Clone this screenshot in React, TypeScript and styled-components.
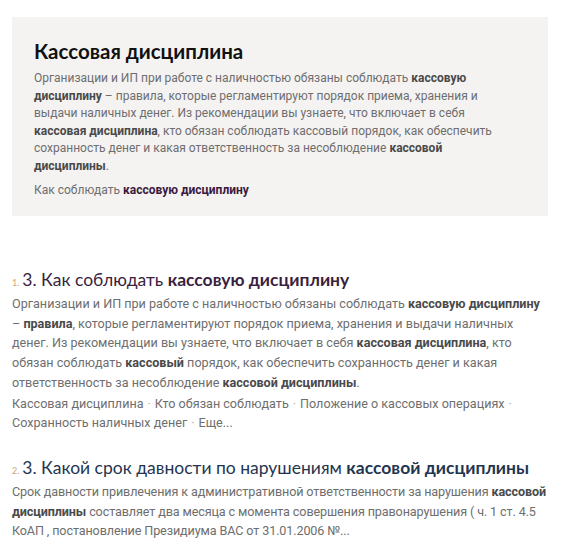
import React from "react";
import styled, { createGlobalStyle } from "styled-components";

const Global = createGlobalStyle`
  html, body { margin: 0; padding: 0; background: #fff; }
  body { font-family: Roboto, "Liberation Sans", sans-serif; }
`;

const Page = styled.div`
  padding: 17px 14px 0 12px;
  display: flex;
  flex-direction: column;
`;

const Card = styled.section`
  background: #f4f3f2;
  margin-right: 2px;
  padding: 21px 56px 0 22px;
  height: 199px;
  box-sizing: border-box;
`;

const CardTitle = styled.h1`
  margin: 0 0 6px;
  font-family: Lato, "Liberation Sans", sans-serif;
  font-size: 20.5px;
  font-weight: 700;
  color: #111;
  line-height: 26px;
`;

const CardText = styled.p`
  margin: 0;
  font-size: 12px;
  line-height: 17.5px;
  color: #6e6e6e;
  b { color: #4a4a4a; font-weight: 700; }
`;

const CardLink = styled.div`
  margin-top: 7px;
  font-size: 12px;
  line-height: 17.5px;
  color: #6e6e6e;
  b { color: #3b1a40; font-weight: 700; }
`;

const Result = styled.article<{ $top: number }>`
  display: flex;
  flex-direction: column;
  margin-top: ${(p) => p.$top}px;
`;

const ResultTitle = styled.h2<{ $color: string }>`
  margin: 0;
  font-family: Lato, "Liberation Sans", sans-serif;
  font-size: 17.5px;
  font-weight: 400;
  line-height: 22px;
  color: ${(p) => p.$color};
  b { font-weight: 700; }
`;

const Num = styled.span`
  font-size: 9px;
  color: #d1a574;
  margin-right: 3px;
`;

const Text = styled.p<{ $tight?: boolean }>`
  margin: 0;
  font-size: 12.6px;
  line-height: 19.7px;
  color: #6e6e6e;
  letter-spacing: ${(p) => (p.$tight ? "-0.12px" : "0")};
  b { color: #4a4a4a; font-weight: 700; }
`;

const Links = styled.div`
  margin-top: 1px;
  font-size: 12.6px;
  line-height: 19.7px;
  color: #6e6e6e;
`;

const Sep = styled.span`
  color: #aaa;
  margin: 0 4px;
`;

export default function App() {
  return (
    <>
      <Global />
      <Page>
        <Card>
          <CardTitle>Кассовая дисциплина</CardTitle>
          <CardText>
            Организации и ИП при работе с наличностью обязаны соблюдать <b>кассовую дисциплину</b> – правила, которые регламентируют порядок приема, хранения и выдачи наличных денег. Из рекомендации вы узнаете, что включает в себя <b>кассовая дисциплина</b>, кто обязан соблюдать кассовый порядок, как обеспечить сохранность денег и какая ответственность за несоблюдение <b>кассовой дисциплины</b>.
          </CardText>
          <CardLink>
            Как соблюдать <b>кассовую дисциплину</b>
          </CardLink>
        </Card>
        <Result $top={53}>
          <ResultTitle $color="#3a1f40">
            <Num>1.</Num>3. Как соблюдать <b>кассовую дисциплину</b>
          </ResultTitle>
          <Text>
            Организации и ИП при работе с наличностью обязаны соблюдать <b>кассовую дисциплину</b> –{"\u00a0"}<b>правила</b>, которые регламентируют порядок приема, хранения и выдачи наличных денег. Из рекомендации вы узнаете, что включает в себя <b>кассовая дисциплина</b>, кто обязан соблюдать <b>кассовый</b> порядок, как обеспечить сохранность денег и какая ответственность за несоблюдение <b>кассовой дисциплины</b>.
          </Text>
          <Links>
            Кассовая дисциплина<Sep>·</Sep>Кто обязан соблюдать<Sep>·</Sep>Положение о кассовых операциях<Sep>·</Sep> Сохранность наличных денег<Sep>·</Sep>Еще...
          </Links>
        </Result>
        <Result $top={24}>
          <ResultTitle $color="#1f3550">
            <Num>2.</Num>3. Какой срок давности по нарушениям <b>кассовой дисциплины</b>
          </ResultTitle>
          <Text $tight>
            Срок давности привлечения к административной ответственности за нарушения <b>кассовой дисциплины</b> составляет два месяца с момента совершения правонарушения ( ч. 1 ст. 4.5 КоАП , постановление Президиума ВАС от 31.01.2006 №...
          </Text>
        </Result>
      </Page>
    </>
  );
}
